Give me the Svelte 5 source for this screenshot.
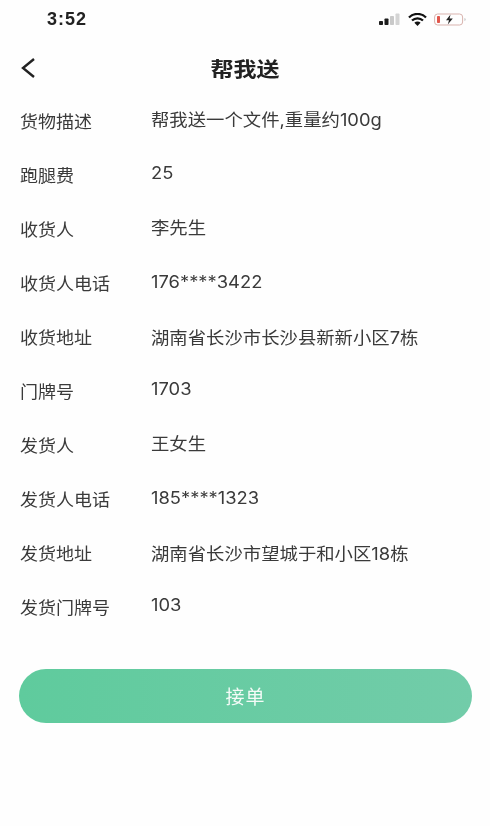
<script>
  const rows = [
    ['货物描述', '帮我送一个文件,重量约100g'],
    ['跑腿费', '25'],
    ['收货人', '李先生'],
    ['收货人电话', '176****3422'],
    ['收货地址', '湖南省长沙市长沙县新新小区7栋'],
    ['门牌号', '1703'],
    ['发货人', '王女生'],
    ['发货人电话', '185****1323'],
    ['发货地址', '湖南省长沙市望城于和小区18栋'],
    ['发货门牌号', '103']
  ];
</script>

<div class="page">
  <div class="status">
    <span class="time">3:52</span>
    <div class="icons">
      <svg width="22" height="13" viewBox="0 0 22 13">
        <rect x="0" y="8" width="4" height="4" rx=".8" fill="#1c1c1c"/>
        <rect x="5.5" y="5.5" width="4" height="6.5" rx=".8" fill="#1c1c1c"/>
        <rect x="11" y="3" width="4" height="9" rx=".8" fill="#c9c9c9"/>
        <rect x="16.5" y="0.5" width="4" height="11.5" rx=".8" fill="#d4d4d4"/>
      </svg>
      <svg width="19" height="13" viewBox="0 0 19 13">
        <path d="M1 4.5a12 12 0 0 1 17 0M4 7.5a8 8 0 0 1 11 0" fill="none" stroke="#111" stroke-width="2.3"/>
        <path d="M6.4 9.8a4.4 4.4 0 0 1 6.2 0L9.5 13z" fill="#111"/>
      </svg>
      <svg width="32" height="13" viewBox="0 0 32 13">
        <rect x=".6" y="1" width="28" height="11" rx="3" fill="none" stroke="#d9b3ae" stroke-width="1"/>
        <rect x="3" y="3" width="3" height="7" rx=".8" fill="#e2574c"/>
        <path d="M16.5 1.5l-4.5 5.8h3l-1.2 4.2 5-6h-3.2z" fill="#222"/>
        <path d="M30.5 5v3a1.6 1.6 0 0 0 0-3z" fill="#bbb"/>
      </svg>
    </div>
  </div>

  <header class="nav">
    <svg class="back" width="16" height="22" viewBox="0 0 16 22">
      <path d="M14 2 3 11l11 9" fill="none" stroke="#222" stroke-width="2.4"/>
    </svg>
    <h1>帮我送</h1>
  </header>

  <div class="list">
    {#each rows as [label, value]}
      <div class="row">
        <span class="label"><span class="wide">{label}</span></span>
        <span class="value" class:address={label.endsWith('地址')} class:number={/^\d+$/.test(value)}><span class="wide">{value}</span></span>
      </div>
    {/each}
  </div>

  <button class="action">接单</button>
</div>

<style>
  :global(body) {
    margin: 0;
    background: #fefefe;
  }
  .page {
    width: 490px;
    height: 826px;
    box-sizing: border-box;
    overflow: hidden;
    background: #fefefe;
    color: #333;
    font-family: "Liberation Sans", "Noto Sans CJK SC", sans-serif;
    filter: blur(0.35px);
  }
  .status {
    height: 38px;
    box-sizing: border-box;
    padding: 9px 24px 0 47px;
    display: flex;
    justify-content: space-between;
    align-items: flex-start;
  }
  .time {
    font-size: 18px;
    line-height: 20px;
    font-weight: 700;
    color: #222;
    letter-spacing: 1px;
  }
  .icons {
    display: flex;
    align-items: center;
    gap: 7px;
    padding-top: 4px;
  }
  .nav {
    height: 60px;
    position: relative;
    display: flex;
    align-items: center;
    justify-content: center;
  }
  .back {
    position: absolute;
    left: 20px;
    top: 19px;
  }
  h1 {
    margin: 0;
    font-size: 20px;
    font-weight: 700;
    color: #222;
    transform: scaleX(1.15);
  }
  .list {
    display: flex;
    flex-direction: column;
    padding: 1px 0 0 20px;
  }
  .row {
    height: 54px;
    display: flex;
  }
  .wide {
    display: inline-block;
    transform-origin: left center;
    white-space: nowrap;
  }
  .label {
    width: 131px;
    font-size: 17px;
    line-height: 24px;
    padding-top: 12px;
    color: #3a3a3a;
  }
  .label .wide {
    transform: scaleX(1.06);
  }
  .value {
    font-family: Inter, "Noto Sans CJK SC", sans-serif;
    font-size: 17px;
    line-height: 24px;
    padding-top: 9px;
    color: #3a3a3a;
  }
  .value.address {
    padding-top: 11px;
  }
  .value.number {
    padding-top: 8px;
  }
  .value .wide {
    transform: scaleX(1.08);
  }
  .action {
    display: block;
    width: 453px;
    height: 54px;
    margin: 30px 0 0 19px;
    padding: 0 0 2px;
    border: 0;
    border-radius: 27px;
    background: linear-gradient(90deg, #5fcb9d, #72cca9);
    color: #f4fbf7;
    font-family: inherit;
    font-size: 19px;
    letter-spacing: 1px;
  }
</style>
